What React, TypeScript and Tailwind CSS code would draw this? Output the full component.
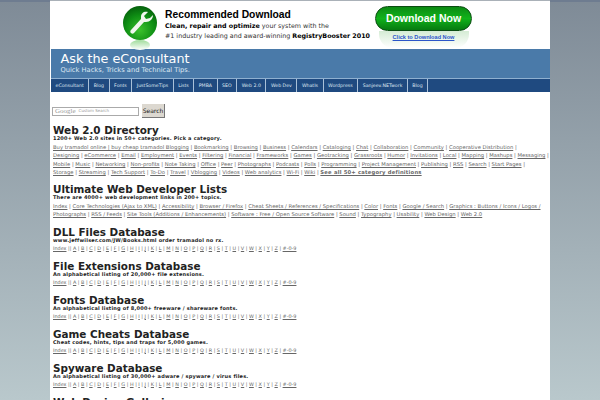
const navItems = ['eConsultant', 'Blog', 'Fonts', 'JustSomeTips', 'Lists', 'PMBA', 'SEO', 'Web 2.0', 'Web Dev', 'WhatIs', 'Wordpress', 'Sanjeev.NETwork', 'Blog'];

const directoryRows = [
  ['Buy tramadol online | buy cheap tramadol Blogging', 'Bookmarking', 'Browsing', 'Business', 'Calendars', 'Cataloging', 'Chat', 'Collaboration', 'Community', 'Cooperative Distribution', ''],
  ['Designing', 'eCommerce', 'Email', 'Employment', 'Events', 'Filtering', 'Financial', 'Frameworks', 'Games', 'Geotracking', 'Grassroots', 'Humor', 'Invitations', 'Local', 'Mapping', 'Mashups', 'Messaging', ''],
  ['Mobile', 'Music', 'Networking', 'Non-profits', 'Note Taking', 'Office', 'Peer', 'Photographs', 'Podcasts', 'Polls', 'Programming', 'Project Management', 'Publishing', 'RSS', 'Search', 'Start Pages', ''],
  ['Storage', 'Streaming', 'Tech Support', 'To-Do', 'Travel', 'Vblogging', 'Videos', 'Web analytics', 'Wi-Fi', 'Wiki'],
];

const listRows = [
  ['Index', 'Core Technologies (Ajax to XML)', 'Accessibility', 'Browser / Firefox', 'Cheat Sheets / References / Specifications', 'Color', 'Fonts', 'Google / Search', 'Graphics : Buttons / Icons / Logos /'],
  ['Photographs', 'RSS / Feeds', 'Site Tools (Additions / Enhancements)', 'Software : Free / Open Source Software', 'Sound', 'Typography', 'Usability', 'Web Design', 'Web 2.0'],
];

const letters = ['A', 'B', 'C', 'D', 'E', 'F', 'G', 'H', 'I', 'J', 'K', 'L', 'M', 'N', 'O', 'P', 'Q', 'R', 'S', 'T', 'U', 'V', 'W', 'X', 'Y', 'Z', '#-0-9'];

const databases = [
  { title: 'DLL Files Database', sub: 'www.jeffwilser.com/JW/Books.html order tramadol no rx.' },
  { title: 'File Extensions Database', sub: 'An alphabetical listing of 20,000+ file extensions.' },
  { title: 'Fonts Database', sub: 'An alphabetical listing of 8,000+ freeware / shareware fonts.' },
  { title: 'Game Cheats Database', sub: 'Cheat codes, hints, tips and traps for 5,000 games.' },
  { title: 'Spyware Database', sub: 'An alphabetical listing of 30,000+ adware / spyware / virus files.' },
];

function LinkRow({ items, tail }: { items: string[]; tail?: string }) {
  return (
    <div className="whitespace-nowrap">
      {items.map((item, i) => (
        <span key={i}>
          {i > 0 && ' | '}
          <a className="underline">{item}</a>
        </span>
      ))}
      {tail && (
        <span>
          {' | '}
          <a className="font-bold underline tracking-[0.2px]">{tail}</a>
        </span>
      )}
    </div>
  );
}

function Section({ title, sub, children }: { title: string; sub: string; children: React.ReactNode }) {
  return (
    <div className="mb-[7.8px]">
      <h2 className="text-[10.4px] leading-[10px] font-bold text-[#222]">{title}</h2>
      <p className="text-[5px] leading-[7px] font-bold tracking-[0.2px] text-[#222]">{sub}</p>
      <div className="mt-[0.8px] text-[5.25px] leading-[8.4px] text-[#666]">{children}</div>
    </div>
  );
}

function AlphaRow() {
  return (
    <div className="whitespace-nowrap text-[4.9px]">
      <a className="underline">Index</a> ||{' '}
      {letters.map((l, i) => (
        <span key={l}>
          {i > 0 && ' | '}
          <a className="underline">{l}</a>
        </span>
      ))}
    </div>
  );
}

function Banner() {
  return (
    <div className="flex h-[48px] bg-white">
      <svg width="36" height="46" viewBox="0 0 36 46" className="ml-[73px] mt-[4px] shrink-0">
        <defs>
          <radialGradient id="orb" cx="50%" cy="70%" r="70%">
            <stop offset="0%" stopColor="#3cc22c" />
            <stop offset="60%" stopColor="#0f8f14" />
            <stop offset="100%" stopColor="#05600c" />
          </radialGradient>
          <linearGradient id="glow" x1="0" y1="0" x2="0" y2="1">
            <stop offset="0%" stopColor="#9fdc9a" />
            <stop offset="100%" stopColor="#ffffff" />
          </linearGradient>
        </defs>
        <ellipse cx="17" cy="40" rx="10" ry="5" fill="url(#glow)" />
        <circle cx="17" cy="18" r="17" fill="url(#orb)" />
        <path d="M25 7 L21 11 L23 14 L27 13 L30 10 C30 14 27 17 23 17 L21 17 L11 28 C9 30 6 27 8 25 L18 14 L18 12 C18 8 21 6 25 7 Z" fill="#f2f7ee" />
      </svg>
      <div className="ml-[6px] mt-[8px] w-[210px] shrink-0 text-[#333]">
        <div className="font-['Liberation_Sans',sans-serif] text-[10.3px] leading-[12px] font-bold text-black">Recommended Download</div>
        <div className="text-[6.35px] leading-[10px] whitespace-nowrap">
          <b className="text-black">Clean, repair and optimize</b> your system with the
        </div>
        <div className="text-[6.35px] leading-[10px] whitespace-nowrap">
          #1 industry leading and award-winning <b className="text-black">RegistryBooster 2010</b>
        </div>
      </div>
      <div className="mt-[5px] flex w-[97px] shrink-0 flex-col items-center">
        <div className="flex h-[25px] w-[97px] shrink-0 items-center justify-center rounded-full border border-[#0b4d12] bg-gradient-to-b from-[#0c8a14] via-[#11b31a] to-[#067a10] font-['Liberation_Sans',sans-serif] text-[10.5px] font-bold text-white">
          Download Now
        </div>
        <div className="flex h-[17px] w-[90px] justify-center rounded-b-[14px] bg-gradient-to-b from-[#d5ecd5] to-white pt-[2px]">
          <a className="font-['Liberation_Sans',sans-serif] text-[5.6px] leading-[8px] font-bold text-[#2a55c8] underline">Click to Download Now</a>
        </div>
      </div>
    </div>
  );
}

export default function App() {
  return (
    <div className="h-[400px] overflow-hidden bg-[linear-gradient(#6e7c90_0,#6e7c90_2px,#7f8b97_2px,#b9c8cc_100%)] font-['DejaVu_Sans',sans-serif]">
      <div className="mx-auto h-[400px] w-[500px] overflow-hidden border-t border-[#aab1b8] bg-white">
        <Banner />
        <div className="ml-[1px] h-[30px] border-b border-[#8fb0d0] bg-[#4a7aa9] pl-[9.5px] pt-[2px] text-white">
          <div className="text-[12.8px] leading-[15px]">Ask the eConsultant</div>
          <div className="text-[6.7px] leading-[9px] text-[#dce8f2]">Quick Hacks, Tricks and Technical Tips.</div>
        </div>
        <nav className="ml-[1px] flex h-[13px] bg-[#1f4a80]">
          {navItems.map((item, i) => (
            <a key={i} className="flex items-center border-r border-[#a9c0d8] px-[4.5px] text-[4.7px] whitespace-nowrap text-[#dfe8f2]">
              {item}
            </a>
          ))}
        </nav>
        <div className="flex items-center gap-[3px] pl-[2px] pt-[12px]">
          <div className="flex h-[9px] w-[87px] items-center border border-[#aaa] bg-white pl-[2px] text-[#999]">
            <span className="font-['Liberation_Serif',serif] text-[7px] leading-none">Google</span>
            <span className="ml-[3px] text-[4px] leading-none">Custom Search</span>
          </div>
          <div className="flex h-[14px] w-[23px] items-center justify-center border-r border-b border-[#777] bg-[#dcd8d0] text-[6px] text-[#222]">Search</div>
        </div>
        <div className="pl-[3px] pt-[7px]">
          <Section title="Web 2.0 Directory" sub="1200+ Web 2.0 sites in 50+ categories. Pick a category.">
            {directoryRows.map((row, i) => (
              <LinkRow key={i} items={row} tail={i === 3 ? 'See all 50+ category definitions' : undefined} />
            ))}
          </Section>
          <Section title="Ultimate Web Developer Lists" sub="There are 4000+ web development links in 200+ topics.">
            {listRows.map((row, i) => (
              <LinkRow key={i} items={row} />
            ))}
          </Section>
          {databases.map((db) => (
            <Section key={db.title} title={db.title} sub={db.sub}>
              <AlphaRow />
            </Section>
          ))}
          <h2 className="text-[10.4px] leading-[10px] font-bold text-[#222]">Web Design Galleries</h2>
        </div>
      </div>
    </div>
  );
}
